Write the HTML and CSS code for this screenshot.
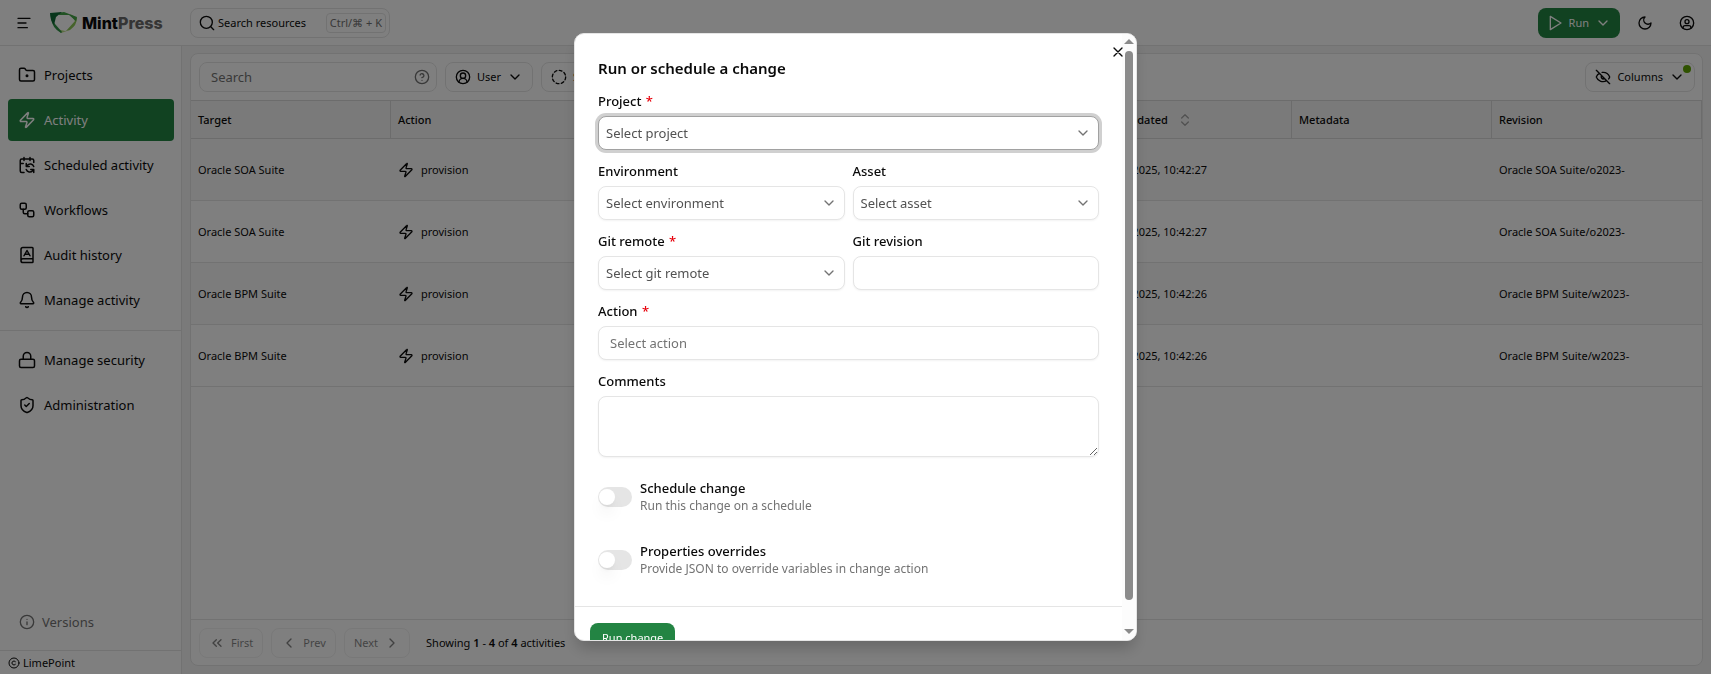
FILE: index.html
```html
<!DOCTYPE html>
<html lang="en">
<head>
<meta charset="utf-8">
<title>MintPress</title>
<link rel="stylesheet" href="styles.css">
</head>
<body>
<svg class="sprite" aria-hidden="true">
  <symbol id="zap" viewBox="0 0 24 24"><path d="M4 14a1 1 0 0 1-.78-1.63l9.9-10.2a.5.5 0 0 1 .86.46l-1.92 6.02A1 1 0 0 0 13 10h7a1 1 0 0 1 .78 1.63l-9.9 10.2a.5.5 0 0 1-.86-.46l1.92-6.02A1 1 0 0 0 11 14z"/></symbol>
  <symbol id="down" viewBox="0 0 24 24"><path d="m6 9 6 6 6-6"/></symbol>
  <symbol id="account" viewBox="0 0 24 24"><path d="M17.9 20v-1a3 3 0 0 0-3-3H9.100a3 3 0 0 0-3 3v1"/><circle cx="12" cy="10" r="3"/><circle cx="12" cy="12" r="10"/></symbol>
  <symbol id="user" viewBox="0 0 24 24"><path d="M18 20a6 6 0 0 0-12 0"/><circle cx="12" cy="10" r="4"/><circle cx="12" cy="12" r="10"/></symbol>
</svg>

<div class="app">
  <header class="topbar">
    <button class="plain menu" aria-label="Toggle menu"><svg class="icon" viewBox="0 0 24 24"><path d="M21 5H3M15 12H3M17 19H3"/></svg></button>
    <a class="brand" href="#">
      <svg class="brand-mark" viewBox="0 0 27 22">
        <path fill="#8cc657" d="M20 2 27 6Q27 13 20 18L16 19 25 9Z"/>
        <path fill="#44a548" d="M8 1 14 0 27 5 26 9 19 3 9 3Z"/>
        <path fill="#b9dc84" d="M20 18 11 21 7 17 15 19Z"/>
        <path fill="#2f9146" d="M1 6 5 12 12 20 11 21Q2 16 1 6Z"/>
        <path fill="#0f6a37" d="M0 1 12 0 6 5 4 13Q0 8 0 1Z"/>
      </svg>
      <span><b>Mint</b><b class="press">Press</b></span>
    </a>
    <button class="resources">
      <svg class="icon" viewBox="0 0 24 24"><circle cx="11" cy="11" r="9"/><path d="m22 22-4.300-4.300"/></svg>
      <span>Search resources</span><kbd>Ctrl/⌘ + K</kbd>
    </button>
    <div class="top-actions">
      <button class="run"><svg class="icon" viewBox="0 0 24 24"><path d="M5 2 21 12 5 22Z"/></svg>Run<svg class="icon" viewBox="0 0 24 24"><use href="#down"/></svg></button>
      <button class="plain" aria-label="Theme"><svg class="icon" viewBox="0 0 24 24"><path d="M12 3a6 6 0 0 0 9 9 9 9 0 1 1-9-9Z"/></svg></button>
      <button class="plain" aria-label="Account"><svg class="icon" viewBox="0 0 24 24"><use href="#account"/></svg></button>
    </div>
  </header>

  <div class="body">
    <aside class="sidebar">
      <nav class="nav">
        <a href="#"><svg class="icon" viewBox="0 0 24 24"><path d="M4 20h16a2 2 0 0 0 2-2V8a2 2 0 0 0-2-2h-7.900a2 2 0 0 1-1.700-.9l-.8-1.200A2 2 0 0 0 7.900 3H4a2 2 0 0 0-2 2v13a2 2 0 0 0 2 2Z"/><circle cx="12" cy="13" r="1"/></svg>Projects</a>
        <a href="#" class="active"><svg class="icon" viewBox="0 0 24 24"><use href="#zap"/></svg>Activity</a>
        <a href="#"><svg class="icon" viewBox="0 0 24 24"><path d="M11 10v4h4M11 14l1.500-1.600a5 5 0 0 1 8.500 1.600M16 2v4M21 22v-4h-4M21 18l-1.500 1.600a5 5 0 0 1-8.500-1.600M21 8.500V6a2 2 0 0 0-2-2H5a2 2 0 0 0-2 2v14a2 2 0 0 0 2 2h3M3 10h4M8 2v4"/></svg>Scheduled activity</a>
        <a href="#"><svg class="icon" viewBox="0 0 24 24"><rect width="8" height="8" x="3" y="3" rx="2"/><path d="M7 11v4a2 2 0 0 0 2 2h4"/><rect width="8" height="8" x="13" y="13" rx="2"/></svg>Workflows</a>
        <a href="#"><svg class="icon" viewBox="0 0 24 24"><path d="M4 19.500v-15A2.500 2.500 0 0 1 6.500 2H19a1 1 0 0 1 1 1v18a1 1 0 0 1-1 1H6.500a1 1 0 0 1 0-5H20M8 13l4-7 4 7M9.100 11h5.700"/></svg>Audit history</a>
        <a href="#"><svg class="icon" viewBox="0 0 24 24"><path d="M10.300 21a2 2 0 0 0 3.400 0M3.300 15.300A1 1 0 0 0 4 17h16a1 1 0 0 0 .7-1.700C19.400 14 18 12.500 18 8A6 6 0 0 0 6 8c0 4.500-1.400 6-2.700 7.300"/></svg>Manage activity</a>
      </nav>
      <nav class="nav">
        <a href="#"><svg class="icon" viewBox="0 0 24 24"><rect width="20" height="11" x="2" y="11" rx="2"/><path d="M7 11V7a5 5 0 0 1 10 0v4"/></svg>Manage security</a>
        <a href="#"><svg class="icon" viewBox="0 0 24 24"><path d="M20 13c0 5-3.500 7.500-7.700 9a1 1 0 0 1-.6 0C7.500 20.500 4 18 4 13V6a1 1 0 0 1 1-1c2 0 4.500-1.200 6.200-2.700a1.200 1.200 0 0 1 1.500 0C14.500 3.800 17 5 19 5a1 1 0 0 1 1 1zM9 12l2 2 4-4"/></svg>Administration</a>
      </nav>
      <a class="versions" href="#"><svg class="icon" viewBox="0 0 24 24"><circle cx="12" cy="12" r="10"/><path d="M12 16v-4M12 8h.01"/></svg>Versions</a>
      <footer class="copyright"><svg class="icon" viewBox="0 0 24 24"><circle cx="12" cy="12" r="10"/><path d="M14.800 14.800a4 4 0 1 1 0-5.600"/></svg>LimePoint</footer>
    </aside>

    <main class="panel">
      <div class="filters">
        <div class="search"><input type="text" placeholder="Search" aria-label="Search"><svg class="icon" viewBox="0 0 24 24"><circle cx="12" cy="12" r="10"/><path d="M9.100 9a3 3 0 0 1 5.800 1c0 2-3 3-3 3M12 17h.01"/></svg></div>
        <button class="filter"><svg class="icon" viewBox="0 0 24 24"><use href="#user"/></svg>User<svg class="icon" viewBox="0 0 24 24"><use href="#down"/></svg></button>
        <button class="filter"><svg class="icon" viewBox="0 0 24 24"><circle cx="12" cy="12" r="10" stroke-dasharray="4.300 3.554"/></svg>Status<svg class="icon" viewBox="0 0 24 24"><use href="#down"/></svg></button>
        <button class="filter columns"><svg class="icon" viewBox="0 0 24 24"><path d="M10.700 5.100a10.700 10.700 0 0 1 11.200 6.600 1 1 0 0 1 0 .7 10.700 10.700 0 0 1-1.400 2.500M14.100 14.200a3 3 0 0 1-4.200-4.200M17.500 17.500a10.700 10.700 0 0 1-15.400-5.200 1 1 0 0 1 0-.7 10.700 10.700 0 0 1 4.400-5.100M2 2l20 20"/></svg>Columns<svg class="icon" viewBox="0 0 24 24"><use href="#down"/></svg><i class="dot"></i></button>
      </div>
      <div class="table-area">
        <table>
          <colgroup><col class="c-fixed"><col class="c-fixed"><col><col class="c-fixed"><col class="c-fixed"><col class="c-rev"></colgroup>
          <thead><tr><th>Target</th><th>Action</th><th>Status</th><th>Last updated <svg class="icon sort" viewBox="0 0 24 24"><path d="m7 15 5 5 5-5M7 9l5-5 5 5"/></svg></th><th>Metadata</th><th>Revision</th></tr></thead>
          <tbody>
            <tr><td>Oracle SOA Suite</td><td><span class="act"><svg class="icon" viewBox="0 0 24 24"><use href="#zap"/></svg>provision</span></td><td></td><td>01/08/2025, 10:42:27</td><td></td><td>Oracle SOA Suite/o2023-</td></tr>
            <tr><td>Oracle SOA Suite</td><td><span class="act"><svg class="icon" viewBox="0 0 24 24"><use href="#zap"/></svg>provision</span></td><td></td><td>01/08/2025, 10:42:27</td><td></td><td>Oracle SOA Suite/o2023-</td></tr>
            <tr><td>Oracle BPM Suite</td><td><span class="act"><svg class="icon" viewBox="0 0 24 24"><use href="#zap"/></svg>provision</span></td><td></td><td>01/08/2025, 10:42:26</td><td></td><td>Oracle BPM Suite/w2023-</td></tr>
            <tr><td>Oracle BPM Suite</td><td><span class="act"><svg class="icon" viewBox="0 0 24 24"><use href="#zap"/></svg>provision</span></td><td></td><td>01/08/2025, 10:42:26</td><td></td><td>Oracle BPM Suite/w2023-</td></tr>
          </tbody>
        </table>
      </div>
      <div class="pager">
        <button disabled><svg class="icon" viewBox="0 0 24 24"><path d="m11 17-5-5 5-5M18 17l-5-5 5-5"/></svg>First</button>
        <button disabled><svg class="icon" viewBox="0 0 24 24"><path d="m15 18-6-6 6-6"/></svg>Prev</button>
        <button disabled>Next<svg class="icon" viewBox="0 0 24 24"><path d="m9 18 6-6-6-6"/></svg></button>
        <p>Showing <b>1</b> - <b>4</b> of <b>4</b> activities</p>
      </div>
    </main>
  </div>
</div>

<div class="overlay">
  <section class="dialog" role="dialog" aria-modal="true" aria-labelledby="dialog-title">
    <div class="dialog-scroll">
      <form class="form">
        <h2 id="dialog-title">Run or schedule a change</h2>
        <div class="field">
          <label for="project">Project <em>*</em></label>
          <div class="select focused"><select id="project"><option>Select project</option></select><svg class="icon" viewBox="0 0 24 24"><use href="#down"/></svg></div>
        </div>
        <div class="pair">
          <div class="field"><label for="env">Environment</label>
            <div class="select"><select id="env"><option>Select environment</option></select><svg class="icon" viewBox="0 0 24 24"><use href="#down"/></svg></div></div>
          <div class="field"><label for="asset">Asset</label>
            <div class="select"><select id="asset"><option>Select asset</option></select><svg class="icon" viewBox="0 0 24 24"><use href="#down"/></svg></div></div>
        </div>
        <div class="pair">
          <div class="field"><label for="remote">Git remote <em>*</em></label>
            <div class="select"><select id="remote"><option>Select git remote</option></select><svg class="icon" viewBox="0 0 24 24"><use href="#down"/></svg></div></div>
          <div class="field"><label for="rev">Git revision</label><input class="text" id="rev" type="text"></div>
        </div>
        <div class="field"><label for="action">Action <em>*</em></label><input class="text" id="action" type="text" placeholder="Select action"></div>
        <div class="field"><label for="comments">Comments</label><textarea class="text" id="comments"></textarea></div>
        <div class="toggles">
          <div class="toggle"><input type="checkbox" role="switch" id="sched"><label for="sched">Schedule change<small>Run this change on a schedule</small></label></div>
          <div class="toggle"><input type="checkbox" role="switch" id="props"><label for="props">Properties overrides<small>Provide JSON to override variables in change action</small></label></div>
        </div>
      </form>
      <div class="dialog-footer"><button class="primary">Run change</button></div>
    </div>
    <div class="scrollbar" aria-hidden="true"><i class="arrow up"></i><i class="thumb"></i><i class="arrow low"></i></div>
    <button class="plain close" aria-label="Close"><svg class="icon" viewBox="0 0 24 24"><path d="M18 6 6 18M6 6l12 12"/></svg></button>
  </section>
</div>
</body>
</html>
```

FILE: styles.css
```css
:root {
  --line: #e5e5e5;
  --green: #238443;
  --text: #0a0a0a;
  --muted: #737373;
}
* { box-sizing: border-box; }
body {
  margin: 0;
  font-family: "Noto Sans", sans-serif;
  font-size: 11px;
  line-height: 18px;
  color: var(--text);
  background: #fff;
}
button, input, select, textarea { font: inherit; color: inherit; }
button { display: flex; align-items: center; background: #fff; border: 1px solid var(--line); border-radius: 8px; padding: 0; }
a { color: inherit; text-decoration: none; }
.sprite { position: absolute; width: 0; height: 0; }
.icon {
  width: 16px; height: 16px; flex: none;
  fill: none; stroke: currentColor; stroke-width: 2;
  stroke-linecap: round; stroke-linejoin: round;
}
.plain { border: 0; background: none; justify-content: center; width: 34px; height: 30px; }

.app { height: 100vh; display: flex; flex-direction: column; }
.topbar { flex: none; height: 46px; display: flex; align-items: center; border-bottom: 1px solid var(--line); padding: 0 7px; }
.brand { display: flex; align-items: center; gap: 5px; margin-left: 9px; width: 140px; font-family: Inter, sans-serif; font-size: 16px; line-height: 20px; }
.brand-mark { width: 27px; height: 22px; }
.brand b { font-weight: 800; }
.brand .press { color: #6b6b6b; }
.resources { width: 200px; height: 30px; gap: 3px; padding: 0 3px 0 8px; }
.resources kbd { margin-left: auto; padding: 0 3px; border: 1px solid var(--line); border-radius: 4px; font-family: inherit; font-size: 11px; color: var(--muted); }
.top-actions { margin-left: auto; display: flex; gap: 8px; }
.run { height: 30px; gap: 6px; padding: 0 9px; background: var(--green); border: 0; color: #fff; }

.body { flex: 1; min-height: 0; display: flex; background: #f5f5f5; }
.sidebar { width: 182px; flex: none; display: flex; flex-direction: column; background: #fff; border-right: 1px solid var(--line); }
.nav { display: flex; flex-direction: column; gap: 3px; padding: 8px 7px 9px 8px; }
.nav + .nav { border-top: 1px solid var(--line); }
.nav a { display: flex; align-items: center; gap: 8px; height: 42px; padding: 0 10px; border-radius: 4px; font-size: 13px; }
.nav .icon { width: 18px; height: 18px; }
.nav .active { background: var(--green); color: #fff; }
.versions { margin-top: auto; display: flex; align-items: center; gap: 7px; height: 56px; padding: 0 19px; color: var(--muted); font-size: 13px; }
.copyright { height: 24px; display: flex; align-items: center; gap: 3px; padding: 0 8px; border-top: 1px solid var(--line); font-size: 11px; }
.copyright .icon { width: 12px; height: 12px; }

.panel { flex: 1; min-width: 0; display: flex; flex-direction: column; margin: 7px 8px 8px; background: #fff; border: 1px solid var(--line); border-radius: 8px; overflow: hidden; }
.filters { display: flex; gap: 8px; padding: 8px 7px 8px 8px; }
.search { width: 238px; height: 30px; display: flex; align-items: center; border: 1px solid var(--line); border-radius: 8px; padding: 0 6px 0 11px; color: var(--muted); }
.search input { flex: 1; min-width: 0; border: 0; padding: 0; outline: 0; background: none; font-size: 13px; }
.search input::placeholder, .text::placeholder { color: var(--muted); opacity: 1; }
.filter { position: relative; height: 30px; gap: 6px; padding: 0 9px; }
.columns { margin-left: auto; }
.dot { position: absolute; top: 2px; right: 3px; width: 8px; height: 8px; border-radius: 50%; background: #5ea500; }

.table-area { flex: 1; min-height: 0; overflow: hidden; }
table { width: 100%; table-layout: fixed; border-collapse: separate; border-spacing: 0; }
.c-fixed { width: 200px; }
.c-rev { width: 210px; }
th { height: 39px; padding: 0 7px; text-align: left; font-weight: 500; background: #f5f5f5; border: solid #d9d9d9; border-width: 1px 1px 1px 0; }
td { height: 62px; padding: 0 7px; border-bottom: 1px solid var(--line); white-space: nowrap; }
tbody tr:nth-child(odd) td { background: #f9f9f9; }
.act { display: flex; align-items: center; gap: 7px; }
.sort { margin-left: 6px; vertical-align: -4px; color: #a3a3a3; }
.pager { flex: none; display: flex; align-items: center; gap: 8px; height: 46px; padding: 0 8px; border-top: 1px solid var(--line); }
.pager button { height: 30px; gap: 6px; padding: 0 9px; opacity: .5; }
.pager p { margin: 0 0 0 8px; }
.pager b { font-weight: 600; }

.overlay { position: fixed; inset: 0; display: flex; justify-content: center; align-items: center; background: rgba(0, 0, 0, .5); }
.dialog { position: relative; width: 563px; height: calc(100vh - 66px); display: flex; overflow: hidden; background: #fff; border: 1px solid var(--line); border-radius: 10px; box-shadow: 0 10px 15px -3px rgba(0, 0, 0, .2); }
.dialog-scroll { flex: 1; min-width: 0; overflow-y: auto; scrollbar-width: none; }
.form { display: flex; flex-direction: column; padding: 24px 23px 21px; gap: 12px; }
.form h2 { margin: 0 0 2px; font-size: 15px; line-height: 20px; font-weight: 600; }
.field { display: flex; flex-direction: column; gap: 6px; min-width: 0; }
.field label, .toggle label { font-size: 13px; line-height: 18px; font-weight: 500; }
.field em { margin-left: 1px; font-style: normal; color: #e7000b; }
.pair { display: grid; grid-template-columns: 1fr 1fr; gap: 8px; }
.select { position: relative; display: flex; }
.select select, .text { width: 100%; height: 34px; border: 1px solid var(--line); border-radius: 8px; background: #fff; font-size: 13px; outline: 0; box-shadow: 0 1px 2px rgba(0, 0, 0, .05); }
.select select { appearance: none; padding: 0 30px 0 7px; color: #525252; }
.select .icon { position: absolute; right: 8px; top: 9px; color: var(--muted); pointer-events: none; }
.select.focused select { border-color: #a1a1a1; box-shadow: 0 0 0 3px #d0d0d0; }
.text { padding: 0 11px; }
textarea.text { height: 61px; display: block; resize: vertical; }
.toggles { display: flex; flex-direction: column; gap: 12px; padding-top: 2px; }
.toggle { display: flex; align-items: center; gap: 8px; height: 51px; }
.toggle input { appearance: none; flex: none; margin: 0; width: 34px; height: 20px; padding: 2px 1px; border-radius: 10px; background: var(--line); }
.toggle input::before { content: ""; display: block; width: 16px; height: 16px; border-radius: 50%; background: #fff; box-shadow: 0 10px 15px -3px rgba(0, 0, 0, .1), 0 4px 6px -4px rgba(0, 0, 0, .1); }
.toggle small { display: block; font-size: 12px; line-height: 18px; font-weight: 400; color: var(--muted); }
.dialog-footer { display: flex; padding: 16px 15px; border-top: 1px solid var(--line); }
.primary { height: 30px; padding: 0 12px; border: 0; background: var(--green); color: #fff; }
.scrollbar { width: 14px; flex: none; display: flex; flex-direction: column; align-items: center; padding: 5px 0 6px; background: #fcfcfc; }
.arrow { border: 5px solid transparent; }
.arrow.up { border-top: 0; border-bottom-color: #8b8b8b; }
.arrow.low { border-bottom: 0; border-top-color: #8b8b8b; }
.thumb { width: 8px; flex: 1; margin: 7px 0 29px; border-radius: 4px; background: #8b8b8b; }
.close { position: absolute; top: 3px; right: 1px; }
```
